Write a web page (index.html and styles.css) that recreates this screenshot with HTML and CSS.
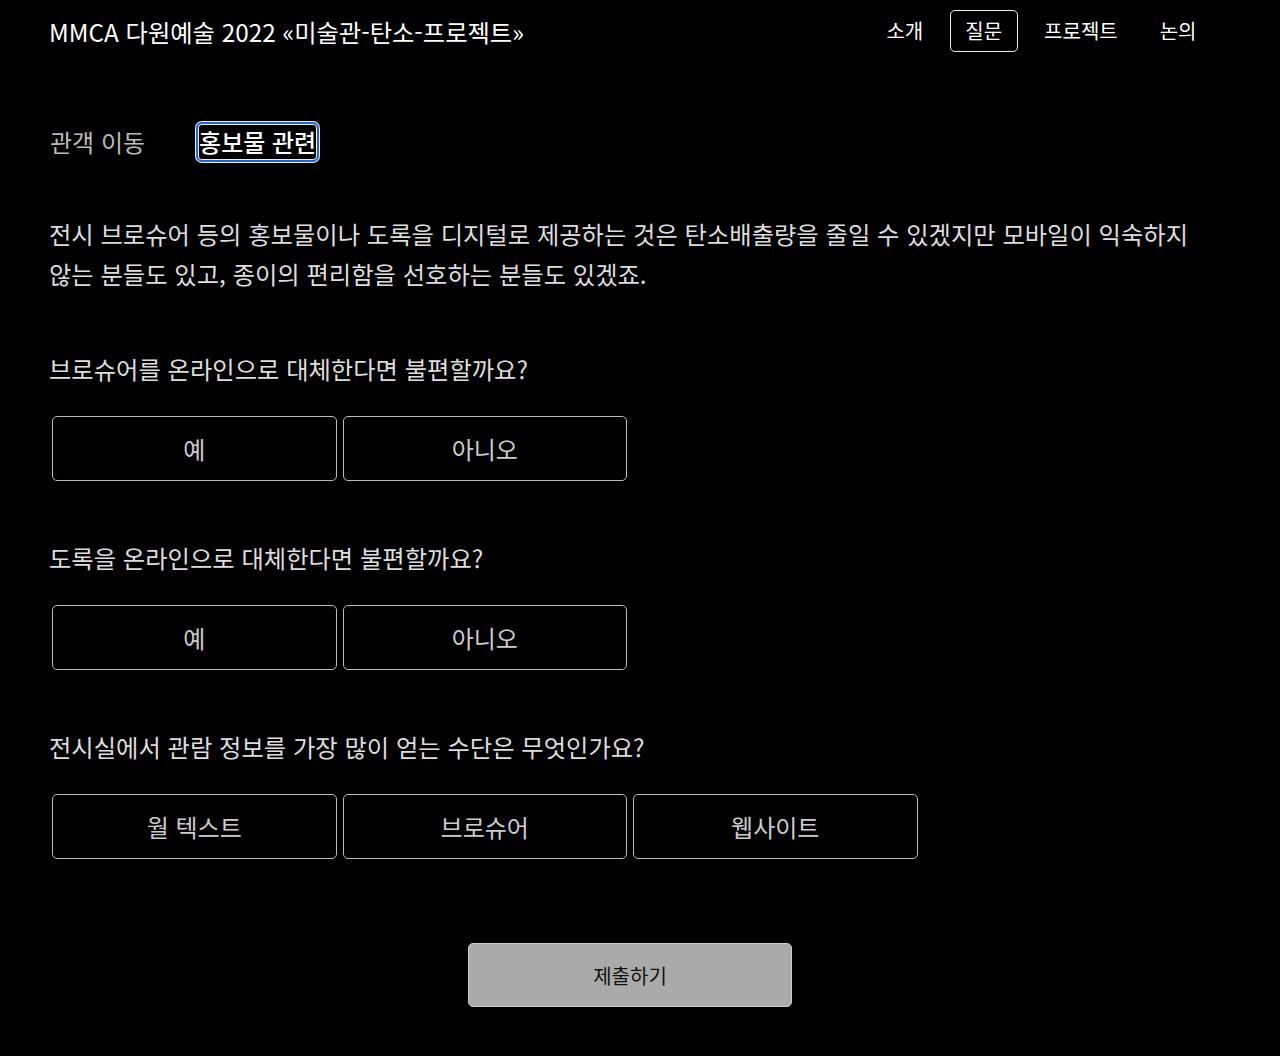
FILE: index.html
```html
<!DOCTYPE html>
<html lang="ko">
  <head>
    <meta charset="utf-8" />
    <title>MMCA 다원예술 2022 «미술관-탄소-프로젝트»</title>
    <link rel="stylesheet" href="styles.css">
  </head>

  <body>
    <!-- 상단 헤더 -->
    <header class="header">
      <div class="site-title">MMCA 다원예술 2022 «미술관-탄소-프로젝트»</div>
      <nav class="nav">
        <a class="nav-item">소개</a>
        <a class="nav-item active">질문</a>
        <a class="nav-item">프로젝트</a>
        <a class="nav-item">논의</a>
      </nav>
    </header>

    <main class="container">
      <!-- 탭 -->
      <div class="tabs">
        <button class="tab">관객 이동</button>
        <button class="tab selected">홍보물 관련</button>
      </div>

      <p class="intro">
        전시 브로슈어 등의 홍보물이나 도록을 디지털로 제공하는 것은 탄소배출량을 줄일 수 있겠지만 모바일이 익숙하지 않는 분들도 있고, 종이의 편리함을 선호하는 분들도 있겠죠.
      </p>

      <!-- 질문 1 -->
      <div class="question">
        <div class="question-title">브로슈어를 온라인으로 대체한다면 불편할까요?</div>
        <div class="choices">
          <button class="choice">예</button>
          <button class="choice">아니오</button>
        </div>
      </div>

      <!-- 질문 2 -->
      <div class="question">
        <div class="question-title">도록을 온라인으로 대체한다면 불편할까요?</div>
        <div class="choices">
          <button class="choice">예</button>
          <button class="choice">아니오</button>
        </div>
      </div>

      <!-- 질문 3 -->
      <div class="question">
        <div class="question-title">전시실에서 관람 정보를 가장 많이 얻는 수단은 무엇인가요?</div>
        <div class="choices">
          <button class="choice">월 텍스트</button>
          <button class="choice">브로슈어</button>
          <button class="choice">웹사이트</button>
        </div>
      </div>

      <div class="submit-row">
        <button class="submit">제출하기</button>
      </div>
    </main>
  </body>
</html>
```

FILE: styles.css
```css
/* 기본 */
html,
body {
  margin: 0;
  padding: 0;
  background-color: #000;
  color: #ddd;
  font-family: "Noto Sans CJK KR", "Noto Sans", sans-serif;
}

button {
  font-family: inherit;
  cursor: pointer;
}

/* 헤더 */
.header {
  display: flex;
  justify-content: space-between;
  align-items: center;
  height: 62px;
  padding: 0 68px 0 49px;
}

.site-title {
  font-size: 24.3px;
  color: #fff;
}

.nav {
  display: flex;
  gap: 11px;
}

.nav-item {
  display: block;
  padding: 0 14.5px;
  height: 40px;
  line-height: 40px;
  font-size: 20px;
  color: #fff;
  border: 1px solid transparent;
  border-radius: 5px;
}
.nav-item.active {
  border-color: #eee;
}

/* 본문 */
.container {
  padding: 60px 69px 40px 49px;
}

.tabs {
  display: flex;
  align-items: center;
  gap: 52px;
  height: 40px;
}

.tab {
  background: none;
  border: none;
  padding: 0 1px;
  font-size: 24px;
  line-height: 36px;
  color: #bbb;
}
.tab.selected {
  color: #fff;
  font-weight: 500;
  border-radius: 4px;
  outline: 2px solid #1d63d2;
  box-shadow: 0 0 0 3px #eee, inset 0 0 0 1px #eee;
}

.intro {
  margin: 52px 0 55px;
  font-size: 24.3px;
  line-height: 40px;
  color: #ddd;
  word-break: keep-all;
}

.question {
  margin-bottom: 57px;
}

.question-title {
  font-size: 24.3px;
  line-height: 40px;
  color: #ddd;
}

.choices {
  display: flex;
  margin-top: 27px;
}

.choice {
  width: 284.5px;
  height: 65px;
  margin: 0 3px;
  background: #000;
  border: 1px solid #bbb;
  border-radius: 5px;
  font-size: 24px;
  color: #ccc;
}

/* 제출 버튼 */
.submit-row {
  display: flex;
  justify-content: center;
  padding-top: 27px;
}

.submit {
  width: 324px;
  height: 64px;
  background: #aaa;
  border: 1px solid #ccc;
  border-radius: 5px;
  font-size: 20px;
  color: #111;
}
```
